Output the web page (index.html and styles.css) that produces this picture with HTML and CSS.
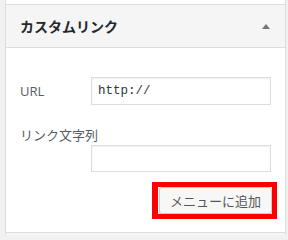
FILE: index.html
```html
<!DOCTYPE html>
<html lang="ja">
<head>
<meta charset="utf-8">
<link rel="stylesheet" href="styles.css">
</head>
<body>
<div class="panel">
  <div class="prev"></div>
  <div class="section">
    <div class="head">
      <h3 class="title">カスタムリンク</h3>
      <span class="arrow"></span>
    </div>
    <div class="content">
      <div class="row">
        <label class="label">URL</label>
        <input class="field mono" type="text" value="http://">
      </div>
      <div class="label2">リンク文字列</div>
      <input class="field field2" type="text">
      <div class="actions">
        <div class="btnwrap">
          <button class="button">メニューに追加</button>
          <span class="mark"></span>
        </div>
      </div>
    </div>
  </div>
  <div class="next"></div>
</div>
</body>
</html>
```
FILE: styles.css
```css
html, body {
  margin: 0;
  padding: 0;
  background: #f1f1f1;
  font-family: "Open Sans", "Noto Sans CJK JP", sans-serif;
  overflow: hidden;
}
.panel {
  margin-left: 5px;
  width: 279px;
  border-left: 1px solid #dddddd;
  border-right: 1px solid #dddddd;
  background: #fff;
}
.prev {
  height: 4px;
  background: #fff;
}
.section {
  border-top: 1px solid #dddddd;
  border-bottom: 1px solid #dddddd;
}
.head {
  height: 42px;
  background: #f5f5f5;
  border-bottom: 1px solid #dddddd;
  display: flex;
  align-items: center;
  justify-content: space-between;
  padding: 0 15px 0 14px;
}
.title {
  margin: 0;
  font-family: "Noto Sans CJK JP", sans-serif;
  font-size: 14px;
  font-weight: 700;
  line-height: 18px;
  color: #23282d;
  letter-spacing: 0;
}
.arrow {
  width: 0;
  height: 0;
  border-left: 4px solid transparent;
  border-right: 4px solid transparent;
  border-bottom: 5px solid #72777c;
  margin-top: 1px;
}
.content {
  padding: 29px 13px 17px 14px;
}
.row {
  display: flex;
  align-items: center;
  height: 28px;
}
.label {
  width: 71px;
  font-size: 13px;
  color: #555d66;
  line-height: 18px;
}
.field {
  box-sizing: border-box;
  width: 180px;
  height: 28px;
  margin: 0;
  border: 1px solid #dddddd;
  box-shadow: inset 0 1px 2px rgba(0,0,0,0.07);
  background: #fff;
  padding: 0 6px;
  outline: none;
  display: block;
}
.mono {
  font-family: "Liberation Mono", monospace;
  font-size: 12.5px;
  color: #32373c;
}
.label2 {
  margin-top: 21px;
  font-family: "Noto Sans CJK JP", sans-serif;
  font-size: 13px;
  line-height: 18px;
  color: #555d66;
}
.field2 {
  margin-top: 1px;
  margin-left: 71px;
  height: 27px;
}
.actions {
  margin-top: 15px;
  display: flex;
  justify-content: flex-end;
}
.btnwrap {
  position: relative;
  height: 28px;
}
.button {
  box-sizing: border-box;
  width: 113px;
  height: 27px;
  margin: 0;
  padding: 0;
  border: 1px solid #cccccc;
  border-radius: 3px;
  background: #f7f7f7;
  box-shadow: 0 1px 0 #cccccc;
  font-family: "Noto Sans CJK JP", sans-serif;
  font-size: 13px;
  color: #555555;
  line-height: 25px;
}
.mark {
  position: absolute;
  left: -7px;
  top: -5px;
  width: 125px;
  height: 37px;
  box-sizing: border-box;
  border: 5px solid #ff0000;
  border-left-width: 6px;
}
.next {
  height: 2px;
  background: #f5f5f5;
}
```
